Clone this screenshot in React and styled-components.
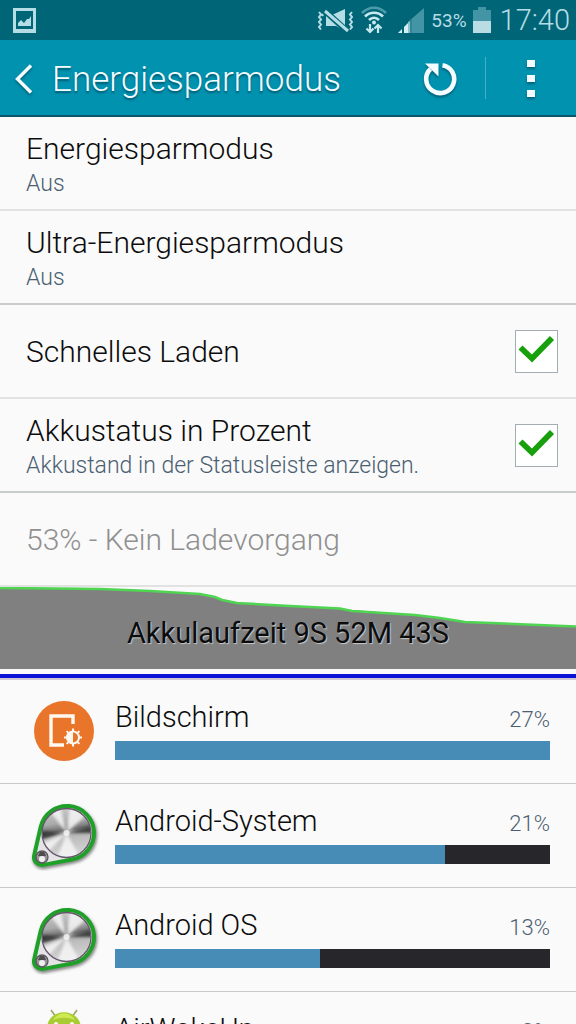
import React, { useState } from 'react'
import styled, { createGlobalStyle, css } from 'styled-components'

const GlobalStyle = createGlobalStyle`
  * {
    box-sizing: border-box;
  }
  body {
    margin: 0;
    background-color: #fafafa;
    font-family: Roboto, 'Noto Sans', sans-serif;
    font-weight: 300;
    color: #0c0c0c;
  }
`

const Screen = styled.div`
  display: flex;
  flex-direction: column;
  height: 100vh;
  overflow: hidden;
`

// Status bar
const StatusBar = styled.div`
  flex: none;
  display: flex;
  align-items: center;
  height: 40px;
  padding: 0 6px 0 12px;
  background-color: #006577;
  color: #b5dde5;
  svg {
    display: block;
  }
`
const StatusIcons = styled.div`
  display: flex;
  align-items: center;
  gap: 6px;
  margin-left: auto;
`
const StatusPercent = styled.span`
  font-size: 19px;
  font-weight: 400;
`
const Clock = styled.time`
  margin-left: 3px;
  font-size: 29px;
  line-height: 40px;
`

// Action bar
const ActionBar = styled.header`
  flex: none;
  display: flex;
  align-items: center;
  height: 77px;
  border-bottom: 2px solid #0b5568;
  background-color: #0092af;
  color: #f4fcff;
`
const BarButton = styled.button`
  display: flex;
  align-items: center;
  justify-content: center;
  width: ${props => props.$width}px;
  height: 75px;
  padding: 2px 0 0;
  border: none;
  background-color: transparent;
  color: inherit;
  cursor: pointer;
  svg {
    filter: drop-shadow(0 2px 1px rgba(0, 50, 70, 0.5));
  }
`
const Title = styled.h1`
  flex: 1;
  margin: 0;
  padding: 4px 0 0 6px;
  font-size: 35px;
  font-weight: 300;
  line-height: 42px;
  text-shadow: 0 2px 2px rgba(0, 50, 70, 0.6);
`
const Divider = styled.span`
  width: 1px;
  height: 42px;
  background-color: #45b0c6;
`

// Settings list
const Content = styled.main`
  flex: 1;
  min-height: 0;
  overflow-y: auto;
  scrollbar-width: none;
`
const rowStyles = css`
  display: flex;
  align-items: center;
  justify-content: space-between;
  width: 100%;
  height: 94px;
  padding: 0 18px 0 26px;
  border: none;
  border-bottom: 2px solid ${props => (props.$strong ? '#c8cccc' : '#e2e2e2')};
  background-color: transparent;
  color: inherit;
  font: inherit;
  text-align: left;
`
const RowButton = styled.button`
  ${rowStyles}
  cursor: pointer;
`
const RowLabel = styled.label`
  ${rowStyles}
  cursor: pointer;
`
const RowInfo = styled.div`
  ${rowStyles}
  color: #909090;
`
const Texts = styled.span`
  display: flex;
  flex-direction: column;
  padding-top: 2px;
`
const RowTitle = styled.span`
  font-size: 30px;
  line-height: 40px;
`
const RowSummary = styled.span`
  font-size: 23px;
  line-height: 30px;
  color: #4a6072;
`
const CheckBox = styled.span`
  display: grid;
  width: 43px;
  height: 43px;
  > * {
    grid-area: 1 / 1;
  }
  svg {
    pointer-events: none;
  }
`
const CheckInput = styled.input`
  appearance: none;
  width: 43px;
  height: 43px;
  margin: 0;
  border: 1px solid #a3aeb2;
  background-color: #fff;
  &:not(:checked) + svg {
    display: none;
  }
`

// Battery chart
const Chart = styled.section`
  display: grid;
  height: 93px;
  border-bottom: 2px solid #cfc8d4;
  > * {
    grid-area: 1 / 1;
  }
  svg {
    display: block;
    width: 100%;
    height: 91px;
  }
`
const ChartLabel = styled.p`
  margin: 0;
  font-size: 29px;
  font-weight: 400;
  line-height: 92px;
  text-align: center;
  text-shadow: 1px 1px 1px #c8c8c8;
`

// App usage
const UsageList = styled.ul`
  margin: 0;
  padding: 0;
  list-style: none;
`
const UsageItem = styled.li`
  display: flex;
  align-items: center;
  gap: 15px;
  height: 104px;
  padding: 0 26px 1px 28px;
  border-bottom: 1px solid #c9c9cb;
  > svg {
    flex: none;
  }
`
const UsageBody = styled.div`
  flex: 1;
  padding-bottom: 5px;
`
const UsageHead = styled.div`
  display: flex;
  align-items: baseline;
  justify-content: space-between;
  height: 44px;
`
const UsageName = styled.span`
  font-size: 29px;
  line-height: 40px;
`
const UsagePercent = styled.span`
  font-size: 22px;
  line-height: 40px;
  color: #4a6072;
`
const Track = styled.div`
  height: 19px;
  background-color: #27272b;
`
const Fill = styled.div`
  height: 100%;
  background-color: #468cb7;
`

const PictureIcon = () => (
  <svg width="24" height="26" viewBox="0 0 24 26">
    <path
      fillRule="evenodd"
      d="M1 1h23v25H1zM4 4v18h17V4z"
      fill="#b5dde5"
    />
    <path d="M6 19v-3l3-3 3 3 3-4 2 0 2-3v10z" fill="#b5dde5" />
  </svg>
)

const MuteIcon = () => (
  <svg width="38" height="26" viewBox="0 0 38 26" fill="none">
    <path
      d="M2 5l2 2.500-2 2.500 2 2.500-2 2.500 2 2.500-2 2.500 2 2.500M5 7l1 2M35 5l-2 2.500 2 2.500-2 2.500 2 2.500-2 2.500 2 2.500-2 2.500"
      stroke="#b5dde5"
      strokeWidth="2"
    />
    <path d="M9 8h6L28 2v22l-9-5h-3l-7 0z" fill="#b5dde5" />
    <path d="M8 4l22 20" stroke="#006577" strokeWidth="6" />
    <path d="M8 4l23 20" stroke="#b5dde5" strokeWidth="3" />
  </svg>
)

const WifiIcon = () => (
  <svg width="26" height="28" viewBox="0 0 26 28" fill="none">
    <path d="M1 7c7-7 17-7 24 0" stroke="#4c9bab" strokeWidth="2.6" />
    <path
      d="M4 10.5c5-5 13-5 18 0M8 14c3-3 7-3 10 0"
      stroke="#c6e9ef"
      strokeWidth="2.6"
    />
    <circle cx="13" cy="16.500" r="2" fill="#c6e9ef" />
    <path
      d="M9 18v8M5.500 22.500L9 26l3.500-3.500M17 27v-7M13.500 22.500L17 19l3.500 3.500"
      stroke="#c6e9ef"
      strokeWidth="2.2"
    />
  </svg>
)

const SignalIcon = () => (
  <svg width="32" height="26" viewBox="0 0 32 26">
    <path d="M15 15L31 1v25H15z" fill="#4395a5" />
    <path d="M18 12v14" stroke="#1d7889" />
    <path d="M5 26l4-4v4zM11 20l4-4v10h-4zM16.500 14.500l0 0v11.500h-1v-11z" fill="#d4f0f4" />
  </svg>
)

const BatteryIcon = () => (
  <svg width="18" height="26" viewBox="0 0 18 26">
    <path d="M5 0h8v3h5v12H0V3h5z" fill="#4395a5" />
    <path d="M0 14h18v12H0z" fill="#b9dde3" />
  </svg>
)

const BackIcon = () => (
  <svg width="18" height="30" viewBox="0 0 18 30" fill="none">
    <path d="M17 1.500L3.500 15 17 28.500" stroke="currentColor" strokeWidth="3.4" />
  </svg>
)

const RefreshIcon = () => (
  <svg width="36" height="36" viewBox="0 0 36 36" fill="none">
    <path
      d="M20.500 4.300A14 14 0 1 1 8.500 8"
      stroke="currentColor"
      strokeWidth="4.6"
    />
    <path d="M3 2.500h13.500v13z" fill="currentColor" />
  </svg>
)

const MoreIcon = () => (
  <svg width="8" height="38" viewBox="0 0 8 38">
    <path d="M0 0h8v7H0zM0 15h8v7H0zM0 30h8v7H0z" fill="currentColor" />
  </svg>
)

const CheckIcon = () => (
  <svg width="43" height="43" viewBox="0 0 43 43" fill="none">
    <path d="M5.500 17.500L17 28.500 37 8" stroke="#18a00c" strokeWidth="5.800" />
  </svg>
)

const DisplayIcon = () => (
  <svg width="72" height="72" viewBox="0 0 72 72" fill="none">
    <circle cx="36" cy="36" r="30" fill="#e8752a" />
    <path d="M36 50H23V21h22v8" stroke="#fff8f0" strokeWidth="3.400" />
    <path
      d="M45 33.500v18M36 42.500h18M38.600 36.100l12.800 12.800M51.400 36.100L38.600 48.900"
      stroke="#fff8f0"
      strokeWidth="2"
    />
    <circle cx="45" cy="42.500" r="6" fill="#e8752a" stroke="#fff8f0" strokeWidth="2" />
    <path d="M45 36.500a6 6 0 0 0 0 12z" fill="#fff8f0" />
  </svg>
)

const KnobIcon = ({ id }) => (
  <svg width="72" height="72" viewBox="0 0 72 72" fill="none">
    <defs>
      <linearGradient id={`${id}-metal`} x1="0" y1="0" x2="0.15" y2="1">
        <stop offset="0" stopColor="#d0d0d0" />
        <stop offset="0.35" stopColor="#a8a8a8" />
        <stop offset="0.5" stopColor="#6e6e6e" />
        <stop offset="0.56" stopColor="#b4b4b4" />
        <stop offset="1" stopColor="#d4d4d4" />
      </linearGradient>
      <clipPath id={`${id}-disc`}>
        <circle cx="38.500" cy="34" r="24" />
      </clipPath>
      <filter id={`${id}-soft`} x="-30%" y="-30%" width="160%" height="160%">
        <feGaussianBlur stdDeviation="1.6" />
      </filter>
    </defs>
    <path
      d="M7 58L14 30A27 27 0 1 1 45 62.500L16.500 68A8 8 0 0 1 7 58z"
      stroke="#333"
      strokeOpacity="0.600"
      strokeWidth="4"
      filter={`url(#${id}-soft)`}
    />
    <path
      d="M6.200 56.200L12.700 27.900A27 27 0 1 1 44 60.500L15.500 65.900A8 8 0 0 1 6.200 56.200z"
      fill="#e4e4e6"
      stroke="#1fa028"
      strokeWidth="4"
    />
    <circle cx="38.500" cy="34" r="24.500" fill={`url(#${id}-metal)`} />
    <g clipPath={`url(#${id}-disc)`}>
      <g filter={`url(#${id}-soft)`}>
        <path
          d="M38.500 34L22 12l10-5zM38.500 34L42 6l16 10zM38.500 34L28 62h26zM38.500 34L10 46l8 9z"
          fill="#f6f6f6"
          fillOpacity="0.850"
        />
        <path d="M38.500 34L11 32v9zM38.500 34l28-8v8z" fill="#2c2c2c" fillOpacity="0.850" />
      </g>
      <circle cx="38.500" cy="34" r="3" fill="#fff" fillOpacity="0.700" />
    </g>
    <circle cx="38.500" cy="34" r="24.500" stroke="#65566a" strokeWidth="1.300" />
    <circle cx="14" cy="58" r="6" fill="#969696" stroke="#5c5560" strokeWidth="1.300" />
    <path d="M10 57h8l-2-4h-4z" fill="#4c4c4c" />
    <circle cx="14" cy="60" r="3" fill="#efefef" />
  </svg>
)

const RobotIcon = () => (
  <svg width="72" height="72" viewBox="0 0 72 72">
    <path d="M28 10l-5-7M44 10l5-7" stroke="#9aa860" strokeWidth="1.600" />
    <path d="M19 21C20 0 52 0 53 21v35H19z" fill="#a9cc34" />
    <path d="M25 13c5-9 17-9 22 0-6-3-16-3-22 0z" fill="#cdea50" />
    <circle cx="28" cy="17" r="2" fill="#fff" />
    <circle cx="44" cy="17" r="2" fill="#fff" />
  </svg>
)

const CheckRow = ({ title, summary, strong }) => {
  const [checked, setChecked] = useState(true)

  return (
    <RowLabel $strong={strong}>
      <Texts>
        <RowTitle>{title}</RowTitle>
        {summary && <RowSummary>{summary}</RowSummary>}
      </Texts>
      <CheckBox>
        <CheckInput
          type="checkbox"
          checked={checked}
          onChange={() => setChecked(!checked)}
        />
        <CheckIcon />
      </CheckBox>
    </RowLabel>
  )
}

const BatteryChart = () => (
  <Chart>
    <svg viewBox="0 0 576 91" preserveAspectRatio="none" fill="none">
      <path
        d="M0 1L55 1.500 150 4 200 7 215 10 237 16 340 22 415 28 465 35 576 40V82H0z"
        fill="#808080"
      />
      <path
        d="M0 1L55 1.500 100 2 150 4 200 7 215 10 222 13 237 16 290 19 340 21.500 352 24 415 28 440 31 465 35 576 39.500"
        stroke="#4fd552"
        strokeWidth="2.500"
      />
      <path d="M0 89h576" stroke="#0a12d8" strokeWidth="4" />
    </svg>
    <ChartLabel>Akkulaufzeit 9S 52M 43S</ChartLabel>
  </Chart>
)

const apps = [
  { name: 'Bildschirm', usage: 27.4, icon: <DisplayIcon /> },
  { name: 'Android-System', usage: 20.8, icon: <KnobIcon id="system" /> },
  { name: 'Android OS', usage: 12.9, icon: <KnobIcon id="os" /> },
  { name: 'AirWakeUp', usage: 8.1, icon: <RobotIcon /> }
]
// bars are relative to the biggest consumer
const maxUsage = Math.max(...apps.map(app => app.usage))

const App = () => (
  <>
    <GlobalStyle />
    <Screen>
      <StatusBar>
        <PictureIcon />
        <StatusIcons>
          <MuteIcon />
          <WifiIcon />
          <SignalIcon />
          <StatusPercent>53%</StatusPercent>
          <BatteryIcon />
          <Clock>17:40</Clock>
        </StatusIcons>
      </StatusBar>
      <ActionBar>
        <BarButton $width={46} aria-label="Zurück">
          <BackIcon />
        </BarButton>
        <Title>Energiesparmodus</Title>
        <BarButton $width={90} aria-label="Aktualisieren">
          <RefreshIcon />
        </BarButton>
        <Divider />
        <BarButton $width={90} aria-label="Weitere Optionen">
          <MoreIcon />
        </BarButton>
      </ActionBar>
      <Content>
        <RowButton>
          <Texts>
            <RowTitle>Energiesparmodus</RowTitle>
            <RowSummary>Aus</RowSummary>
          </Texts>
        </RowButton>
        <RowButton $strong>
          <Texts>
            <RowTitle>Ultra-Energiesparmodus</RowTitle>
            <RowSummary>Aus</RowSummary>
          </Texts>
        </RowButton>
        <CheckRow title="Schnelles Laden" />
        <CheckRow
          title="Akkustatus in Prozent"
          summary="Akkustand in der Statusleiste anzeigen."
          strong
        />
        <RowInfo>
          <Texts>
            <RowTitle>53% - Kein Ladevorgang</RowTitle>
          </Texts>
        </RowInfo>
        <BatteryChart />
        <UsageList>
          {apps.map(({ name, usage, icon }) => (
            <UsageItem key={name}>
              {icon}
              <UsageBody>
                <UsageHead>
                  <UsageName>{name}</UsageName>
                  <UsagePercent>{Math.round(usage)}%</UsagePercent>
                </UsageHead>
                <Track>
                  <Fill style={{ width: `${(usage / maxUsage) * 100}%` }} />
                </Track>
              </UsageBody>
            </UsageItem>
          ))}
        </UsageList>
      </Content>
    </Screen>
  </>
)

export default App
